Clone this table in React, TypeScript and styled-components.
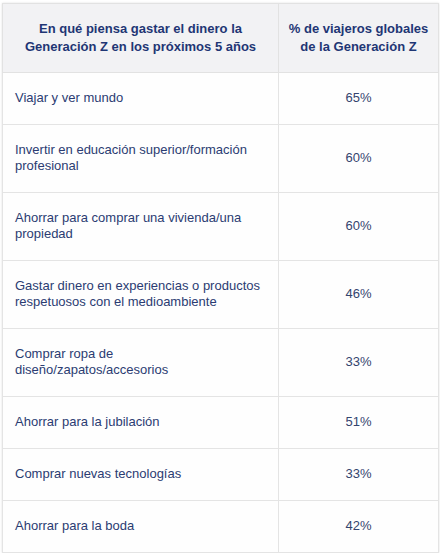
import React from 'react'
import styled, { createGlobalStyle } from 'styled-components'

const GlobalStyle = createGlobalStyle`
  body {
    margin: 0;
    background: #ffffff;
    font-family: "Liberation Sans", Arial, sans-serif;
  }
`

const Page = styled.div`
  padding: 3px 2px 0 2px;
  width: 436px;
`

const Table = styled.table`
  width: 436px;
  border-collapse: collapse;
  table-layout: fixed;
  border: 1px solid #dcdcdc;
  box-shadow: 0 0 2px rgba(0, 0, 0, 0.12);
`

const HeadCell = styled.th`
  background: #f2f2f4;
  color: #1f3674;
  font-size: 13px;
  font-weight: 700;
  line-height: 18px;
  text-align: center;
  padding: 16px 8px 16px;
  border: 1px solid #e2e2e2;
`

const Cell = styled.td<{ $center?: boolean }>`
  background: #fefefe;
  color: ${({ $center }) => ($center ? '#34446e' : '#2b3c72')};
  font-size: 13px;
  line-height: 16px;
  text-align: ${({ $center }) => ($center ? 'center' : 'left')};
  padding: 17px 12px 18px;
  border: 1px solid #e4e4e4;
  vertical-align: middle;
`

const rows: { label: string[]; value: string }[] = [
  { label: ['Viajar y ver mundo'], value: '65%' },
  { label: ['Invertir en educación superior/formación', 'profesional'], value: '60%' },
  { label: ['Ahorrar para comprar una vivienda/una', 'propiedad'], value: '60%' },
  { label: ['Gastar dinero en experiencias o productos', 'respetuosos con el medioambiente'], value: '46%' },
  { label: ['Comprar ropa de', 'diseño/zapatos/accesorios'], value: '33%' },
  { label: ['Ahorrar para la jubilación'], value: '51%' },
  { label: ['Comprar nuevas tecnologías'], value: '33%' },
  { label: ['Ahorrar para la boda'], value: '42%' },
]

const App = () => (
  <>
    <GlobalStyle />
    <Page>
      <Table>
        <colgroup>
          <col style={{ width: 276 }} />
          <col style={{ width: 160 }} />
        </colgroup>
        <thead>
          <tr>
            <HeadCell>
              En qué piensa gastar el dinero la
              <br />
              Generación Z en los próximos 5 años
            </HeadCell>
            <HeadCell>
              % de viajeros globales
              <br />
              de la Generación Z
            </HeadCell>
          </tr>
        </thead>
        <tbody>
          {rows.map((r) => (
            <tr key={r.label.join(' ')}>
              <Cell>
                {r.label.map((line, i) => (
                  <React.Fragment key={line}>
                    {i > 0 && <br />}
                    {line}
                  </React.Fragment>
                ))}
              </Cell>
              <Cell $center>{r.value}</Cell>
            </tr>
          ))}
        </tbody>
      </Table>
    </Page>
  </>
)

export default App
